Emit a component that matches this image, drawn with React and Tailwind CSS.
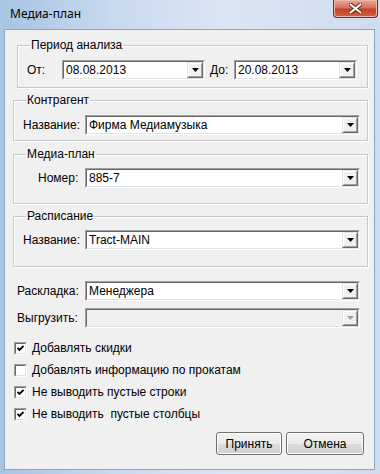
import React from 'react'

const font = { fontFamily: '"Liberation Sans", Arial, sans-serif' }

function Combo({ value, className = '', disabled }) {
  return (
    <div className={`h-[20px] flex border border-t-[#a0a0a0] border-l-[#a0a0a0] border-r-white border-b-white ${className}`}>
      <div className={`flex-1 flex border border-t-[#696969] border-l-[#696969] border-r-[#e3e3e3] border-b-[#e3e3e3] ${disabled ? 'bg-[#f0f0f0]' : 'bg-white'}`}>
        <span className="flex-1 pl-[2px] text-[12px] leading-[16px] text-black whitespace-nowrap overflow-hidden">{value}</span>
        <div className="w-[16px] h-full flex border border-t-[#e3e3e3] border-l-[#e3e3e3] border-r-[#696969] border-b-[#696969]">
          <div className="flex-1 flex items-center justify-center bg-[#f0f0f0] border border-t-white border-l-white border-r-[#a0a0a0] border-b-[#a0a0a0]">
            <svg width="7" height="4" viewBox="0 0 7 4">
              <path d="M0 0h7L3.5 4z" fill={disabled ? '#a0a0a0' : '#000'} />
            </svg>
          </div>
        </div>
      </div>
    </div>
  )
}

function Group({ title, className = '', children }) {
  return (
    <fieldset className={`border border-[#c8c8c8] shadow-[inset_1px_1px_0_#fff,1px_1px_0_#fff] ${className}`}>
      <legend className="ml-[3px] px-[1px] text-[12px] leading-[14px] text-black">{title}</legend>
      {children}
    </fieldset>
  )
}

function Check({ label, checked }) {
  return (
    <div className="h-[22px] flex items-center">
      <div className="w-[13px] h-[13px] flex border border-t-[#a0a0a0] border-l-[#a0a0a0] border-r-white border-b-white">
        <div className="flex-1 bg-white border border-t-[#696969] border-l-[#696969] border-r-[#e3e3e3] border-b-[#e3e3e3] flex items-center justify-center">
          {checked && (
            <svg width="7" height="7" viewBox="0 0 7 7">
              <path d="M0.5 3 L2.5 5 L6.5 1" fill="none" stroke="#000" strokeWidth="1.8" />
            </svg>
          )}
        </div>
      </div>
      <span className="ml-[5px] text-[12px] text-black whitespace-pre">{label}</span>
    </div>
  )
}

function Button({ children, className = '' }) {
  return (
    <div className={`h-[23px] flex items-center justify-center rounded-[3px] border border-[#707070] bg-[linear-gradient(#f2f2f2_0%,#ebebeb_50%,#dddddd_51%,#cfcfcf_100%)] shadow-[inset_0_0_0_1px_#fcfcfc] text-[12px] text-black ${className}`}>
      {children}
    </div>
  )
}

export default function App() {
  return (
    <div style={font} className="w-[380px] h-[474px] overflow-hidden flex flex-col bg-[linear-gradient(90deg,#a8c3e3_0%,#c9d9ee_30%,#dbe6f4_60%,#cfdcee_100%)]">
      {/* Заголовок окна */}
      <div className="h-[29px] flex items-start shrink-0">
        <span className="ml-[10px] mt-[6px] text-[12px] leading-[16px] text-black" style={{ fontFamily: '"Noto Sans", "Liberation Sans", sans-serif' }}>Медиа-план</span>
        <div className="ml-auto mr-[2px] w-[45px] h-[18px] rounded-b-[4px] border border-t-0 border-[#7a2a1f] bg-[linear-gradient(#e9a899_0%,#d7715d_45%,#c4432c_55%,#d2603f_100%)] flex items-center justify-center shadow-[inset_0_0_0_1px_#f0b6a8]">
          <svg width="13" height="11" viewBox="0 0 13 11">
            <path d="M1.5 1.5 L11.5 9.5 M11.5 1.5 L1.5 9.5" stroke="#5a2218" strokeWidth="4" strokeLinecap="round" />
            <path d="M1.5 1.5 L11.5 9.5 M11.5 1.5 L1.5 9.5" stroke="#fff" strokeWidth="2.2" strokeLinecap="round" />
          </svg>
        </div>
      </div>

      {/* Клиентская область */}
      <div className="ml-[4px] mr-[5px] h-[441px] shrink-0 bg-[#f0f0f0] border border-[#8ea3bd] flex flex-col">
        <Group title="Период анализа" className="mt-[8px] ml-[12px] mr-[6px] px-[9px] pt-[8px] pb-[7px]">
          <div className="flex items-center">
            <span className="w-[35px] text-[12px] text-black">От:</span>
            <Combo value="08.08.2013" className="w-[143px]" />
            <span className="ml-[5px] w-[24px] text-[12px] text-black">До:</span>
            <Combo value="20.08.2013" className="w-[123px]" />
          </div>
        </Group>

        <Group title="Контрагент" className="mt-[5px] ml-[8px] mr-[6px] pl-[9px] pr-[7px] pt-[8px] pb-[5px]">
          <div className="flex items-center">
            <span className="w-[62px] text-[12px] text-black">Название:</span>
            <Combo value="Фирма Медиамузыка" className="flex-1" />
          </div>
        </Group>

        <Group title="Медиа-план" className="mt-[6px] ml-[8px] mr-[6px] pl-[9px] pr-[7px] pt-[7px] pb-[15px]">
          <div className="flex items-center">
            <span className="w-[62px] pl-[15px] text-[12px] text-black">Номер:</span>
            <Combo value="885-7" className="flex-1" />
          </div>
        </Group>

        <Group title="Расписание" className="mt-[5px] ml-[8px] mr-[6px] pl-[9px] pr-[7px] pt-[7px] pb-[16px]">
          <div className="flex items-center">
            <span className="w-[62px] text-[12px] text-black">Название:</span>
            <Combo value="Tract-MAIN" className="flex-1" />
          </div>
        </Group>

        <div className="mt-[14px] ml-[12px] mr-[14px] flex items-center">
          <span className="w-[68px] text-[12px] text-black">Раскладка:</span>
          <Combo value="Менеджера" className="flex-1" />
        </div>
        <div className="mt-[7px] ml-[12px] mr-[14px] flex items-center">
          <span className="w-[68px] text-[12px] text-black">Выгрузить:</span>
          <Combo value="" className="flex-1" disabled />
        </div>

        <div className="mt-[9px] ml-[9px] flex flex-col">
          <Check label="Добавлять скидки" checked />
          <Check label="Добавлять информацию по прокатам" />
          <Check label="Не выводить пустые строки" checked />
          <Check label="Не выводить  пустые столбцы" checked />
        </div>

        <div className="mt-[7px] mr-[10px] flex justify-end gap-[4px]">
          <Button className="w-[66px]">Принять</Button>
          <Button className="w-[78px]">Отмена</Button>
        </div>
      </div>
    </div>
  )
}
